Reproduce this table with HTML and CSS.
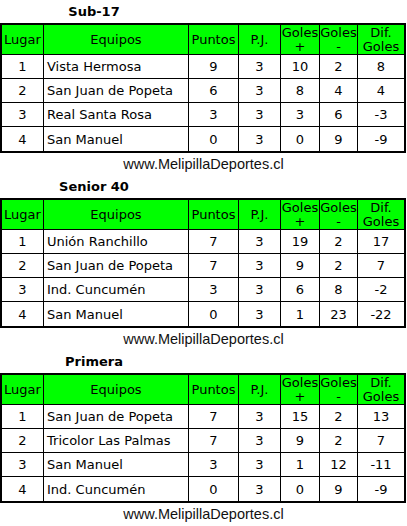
FILE: index.html
```html
<!DOCTYPE html>
<html lang="es">
<head>
<meta charset="utf-8">
<title>Posiciones</title>
<link rel="stylesheet" href="styles.css">
</head>
<body>
<section class="group">
  <div class="title">Sub-17</div>
  <table class="standings">
    <colgroup><col class="c-lugar"><col class="c-equipo"><col class="c-pts"><col class="c-pj"><col class="c-gf"><col class="c-gc"><col class="c-dif"></colgroup>
    <thead><tr><th>Lugar</th><th>Equipos</th><th>Puntos</th><th>P.J.</th><th>Goles<br>+</th><th>Goles<br>-</th><th>Dif.<br>Goles</th></tr></thead>
    <tbody>
      <tr><td>1</td><td class="team">Vista Hermosa</td><td>9</td><td>3</td><td>10</td><td>2</td><td>8</td></tr>
      <tr><td>2</td><td class="team">San Juan de Popeta</td><td>6</td><td>3</td><td>8</td><td>4</td><td>4</td></tr>
      <tr><td>3</td><td class="team">Real Santa Rosa</td><td>3</td><td>3</td><td>3</td><td>6</td><td>-3</td></tr>
      <tr><td>4</td><td class="team">San Manuel</td><td>0</td><td>3</td><td>0</td><td>9</td><td>-9</td></tr>
    </tbody>
  </table>
  <div class="site">www.MelipillaDeportes.cl</div>
</section>
<section class="group">
  <div class="title">Senior 40</div>
  <table class="standings">
    <colgroup><col class="c-lugar"><col class="c-equipo"><col class="c-pts"><col class="c-pj"><col class="c-gf"><col class="c-gc"><col class="c-dif"></colgroup>
    <thead><tr><th>Lugar</th><th>Equipos</th><th>Puntos</th><th>P.J.</th><th>Goles<br>+</th><th>Goles<br>-</th><th>Dif.<br>Goles</th></tr></thead>
    <tbody>
      <tr><td>1</td><td class="team">Unión Ranchillo</td><td>7</td><td>3</td><td>19</td><td>2</td><td>17</td></tr>
      <tr><td>2</td><td class="team">San Juan de Popeta</td><td>7</td><td>3</td><td>9</td><td>2</td><td>7</td></tr>
      <tr><td>3</td><td class="team">Ind. Cuncumén</td><td>3</td><td>3</td><td>6</td><td>8</td><td>-2</td></tr>
      <tr><td>4</td><td class="team">San Manuel</td><td>0</td><td>3</td><td>1</td><td>23</td><td>-22</td></tr>
    </tbody>
  </table>
  <div class="site">www.MelipillaDeportes.cl</div>
</section>
<section class="group">
  <div class="title">Primera</div>
  <table class="standings">
    <colgroup><col class="c-lugar"><col class="c-equipo"><col class="c-pts"><col class="c-pj"><col class="c-gf"><col class="c-gc"><col class="c-dif"></colgroup>
    <thead><tr><th>Lugar</th><th>Equipos</th><th>Puntos</th><th>P.J.</th><th>Goles<br>+</th><th>Goles<br>-</th><th>Dif.<br>Goles</th></tr></thead>
    <tbody>
      <tr><td>1</td><td class="team">San Juan de Popeta</td><td>7</td><td>3</td><td>15</td><td>2</td><td>13</td></tr>
      <tr><td>2</td><td class="team">Tricolor Las Palmas</td><td>7</td><td>3</td><td>9</td><td>2</td><td>7</td></tr>
      <tr><td>3</td><td class="team">San Manuel</td><td>3</td><td>3</td><td>1</td><td>12</td><td>-11</td></tr>
      <tr><td>4</td><td class="team">Ind. Cuncumén</td><td>0</td><td>3</td><td>0</td><td>9</td><td>-9</td></tr>
    </tbody>
  </table>
  <div class="site">www.MelipillaDeportes.cl</div>
</section>
</body>
</html>
```
FILE: styles.css
```css
html, body {
  margin: 0;
  padding: 0;
  background: #ffffff;
}
body {
  font-family: "DejaVu Sans", Verdana, sans-serif;
  font-size: 13px;
  color: #000;
}
.group .title {
  width: 188px;
  height: 23px;
  line-height: 24px;
  text-align: center;
  font-weight: bold;
  font-size: 13px;
}
.group + .group .title {
  height: 23px;
}
.standings {
  width: 406px;
  table-layout: fixed;
  border-collapse: separate;
  border-spacing: 0;
  border: 2px solid #000;
}
.c-lugar { width: 42px; }
.c-equipo { width: 145px; }
.c-pts { width: 50px; }
.c-pj { width: 42px; }
.c-gf { width: 39px; }
.c-gc { width: 38px; }
.c-dif { width: 46px; }
.standings th,
.standings td {
  padding: 0;
  border-right: 1px solid #000;
  border-bottom: 1px solid #000;
  text-align: center;
  font-weight: normal;
  white-space: nowrap;
  overflow: hidden;
}
.standings th:last-child,
.standings td:last-child {
  border-right: none;
}
.standings tbody tr:last-child td {
  border-bottom: none;
}
.standings th {
  background: #00ff00;
  height: 29px;
  line-height: 14px;
}
.standings td {
  height: 23px;
  line-height: 23px;
}
.standings tbody tr:last-child td {
  height: 24px;
}
.standings td.team {
  text-align: left;
  padding-left: 3px;
}
.site {
  height: 22px;
  line-height: 22px;
  text-align: center;
  font-family: "Liberation Sans", Arial, sans-serif;
  font-size: 14.5px;
  color: #111;
}
```
